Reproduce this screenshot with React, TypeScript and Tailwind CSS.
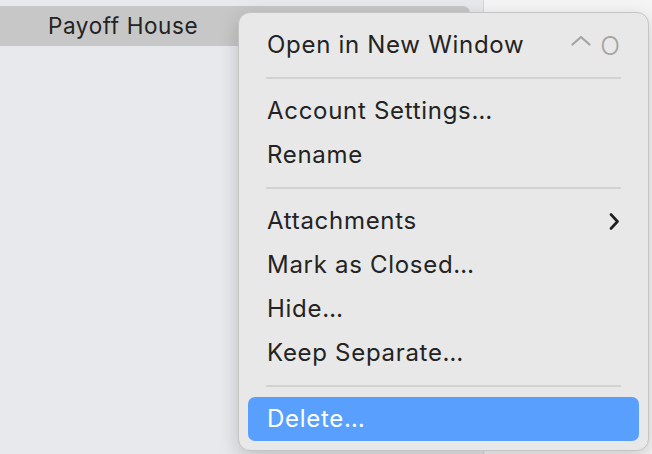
import React from 'react';

// Context menu data
type Item =
  | { kind: 'item'; label: string; shortcut?: string; submenu?: boolean; active?: boolean }
  | { kind: 'sep' };

const items: Item[] = [
  { kind: 'item', label: 'Open in New Window', shortcut: 'O' },
  { kind: 'sep' },
  { kind: 'item', label: 'Account Settings…' },
  { kind: 'item', label: 'Rename' },
  { kind: 'sep' },
  { kind: 'item', label: 'Attachments', submenu: true },
  { kind: 'item', label: 'Mark as Closed…' },
  { kind: 'item', label: 'Hide…' },
  { kind: 'item', label: 'Keep Separate…' },
  { kind: 'sep' },
  { kind: 'item', label: 'Delete…', active: true },
];

const Chevron = () => (
  <svg width="11" height="17" viewBox="0 0 11 17" fill="none">
    <path d="M2 1.5 L8.5 8.5 L2 15.5" stroke="#1e1e1e" strokeWidth="2.6" strokeLinecap="round" strokeLinejoin="round" />
  </svg>
);

// control-key glyph (⌃)
const Caret = () => (
  <svg width="20" height="18" viewBox="0 0 20 18" fill="none">
    <path d="M1.5 8.5 L10 1 L18.5 8.5" stroke="#a4a4a4" strokeWidth="2.2" strokeLinecap="round" strokeLinejoin="round" />
  </svg>
);

export default function App() {
  return (
    <div className="relative w-[652px] h-[454px] overflow-hidden flex font-['Inter',_'Liberation_Sans',_sans-serif] text-[#232323]">
      {/* Sidebar */}
      <aside className="w-[484px] shrink-0 bg-[#e7e9ed] border-r border-[#d6d6d6] pt-[6px]">
        <div className="h-[40px] mr-[13px] rounded-r-[7px] bg-[#c7c7c7] pl-[48px] flex items-center text-[22.5px] tracking-[0.6px]">
          Payoff House
        </div>
      </aside>
      <main className="flex-1 bg-[#f5f5f5]" />

      {/* Context menu */}
      <div className="absolute left-[238px] top-[12px] w-[411px] h-[439px] rounded-[12px] bg-[#e8e8e8] border border-[#c4c4c4] shadow-[0_6px_20px_rgba(0,0,0,0.18)] px-[9px] pt-[10px]">
        {items.map((it, i) =>
          it.kind === 'sep' ? (
            <div key={i} className="h-[22px] flex items-center px-[18px]">
              <div className="h-[2px] w-full bg-[#d2d2d2]" />
            </div>
          ) : (
            <div
              key={i}
              className={`h-[44px] rounded-[7px] pl-[19px] pr-[19px] flex items-center justify-between text-[24px] tracking-[0.7px] ${
                it.active ? 'bg-[#599ffd] text-white' : ''
              }`}
            >
              <span>{it.label}</span>
              {it.shortcut && (
                <span className="text-[#a4a4a4] flex items-center gap-[9px] font-light">
                  <Caret />
                  <span className="text-[26px] tracking-normal">{it.shortcut}</span>
                </span>
              )}
              {it.submenu && <Chevron />}
            </div>
          )
        )}
      </div>
    </div>
  );
}
